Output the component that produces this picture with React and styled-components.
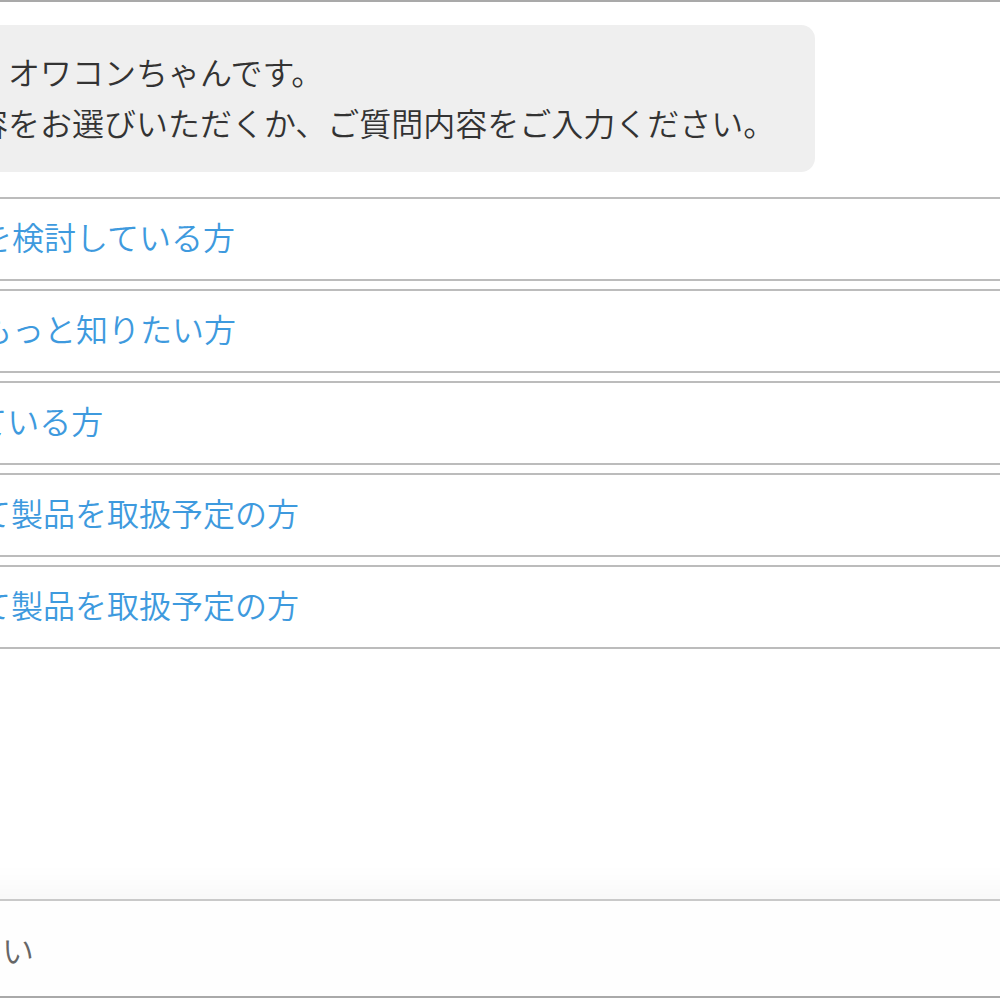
import React from 'react';
import styled, { createGlobalStyle } from 'styled-components';

const GlobalStyle = createGlobalStyle`
  html, body {
    margin: 0;
    padding: 0;
    background: #ffffff;
    overflow: hidden;
  }
  body {
    font-family: "Noto Sans CJK JP", "Noto Sans", sans-serif;
  }
`;

const Viewport = styled.div`
  width: 100vw;
  height: 100vh;
  overflow: hidden;
`;

const Screen = styled.div`
  display: flex;
  flex-direction: column;
  width: 1500px;
  height: 1000px;
  margin-left: -400px;
`;

const ChatArea = styled.main`
  flex: 1;
  display: flex;
  flex-direction: column;
  border-top: 2px solid #a9a9a9;
  padding-top: 23px;
  overflow: hidden;
`;

const MessageRow = styled.div`
  display: flex;
  padding-left: 112px;
`;

const Bubble = styled.div`
  background: #efefef;
  border-radius: 14px;
  padding: 21px 40px 24px;
  color: #333333;
  font-size: 32px;
  font-weight: 350;
  line-height: 51px;
  white-space: nowrap;
`;

const OptionList = styled.ul`
  list-style: none;
  margin: 25px 0 0 100px;
  padding: 0;
  display: flex;
  flex-direction: column;
  gap: 8px;
`;

const Option = styled.button`
  display: block;
  width: 100%;
  box-sizing: border-box;
  background: #ffffff;
  border: 2px solid #bcbcbc;
  padding: 11px 0 17px 118px;
  text-align: left;
  color: #3e9ade;
  font-family: "Noto Sans CJK JP", "Noto Sans", sans-serif;
  font-size: 32px;
  font-weight: 350;
  line-height: 52px;
  white-space: nowrap;
  cursor: pointer;
`;

const Footer = styled.footer`
  box-sizing: border-box;
  height: 99px;
  display: flex;
  align-items: center;
  background: #fefefe;
  border-top: 2px solid #c9c9c9;
  border-bottom: 2px solid #a9a9a9;
  box-shadow: 0 -12px 30px rgba(0, 0, 0, 0.035);
`;

const Input = styled.input`
  flex: 1;
  border: none;
  outline: none;
  background: transparent;
  padding: 0 0 0 52px;
  font-family: "Noto Sans CJK JP", "Noto Sans", sans-serif;
  font-size: 32px;
  font-weight: 350;
  line-height: 52px;
  color: #333333;
  &::placeholder {
    color: #666666;
  }
`;

const BelowStrip = styled.div`
  height: 2px;
  background: #ffffff;
`;

const options = [
  '製品の購入を検討している方',
  'サービスをもっと知りたい方',
  'ITを活用している方',
  '代理店として製品を取扱予定の方',
  '販売店として製品を取扱予定の方',
];

export default function App() {
  return (
    <Viewport>
      <GlobalStyle />
      <Screen>
        <ChatArea>
          <MessageRow>
            <Bubble>
              こんにちは！私、オワコンちゃんです。
              <br />
              お問い合わせ内容をお選びいただくか、ご質問内容をご入力ください。
            </Bubble>
          </MessageRow>
          <OptionList>
            {options.map((text) => (
              <li key={text}>
                <Option type="button">{text}</Option>
              </li>
            ))}
          </OptionList>
        </ChatArea>
        <Footer>
          <Input placeholder="ご質問を入力してください" />
        </Footer>
        <BelowStrip />
      </Screen>
    </Viewport>
  );
}
